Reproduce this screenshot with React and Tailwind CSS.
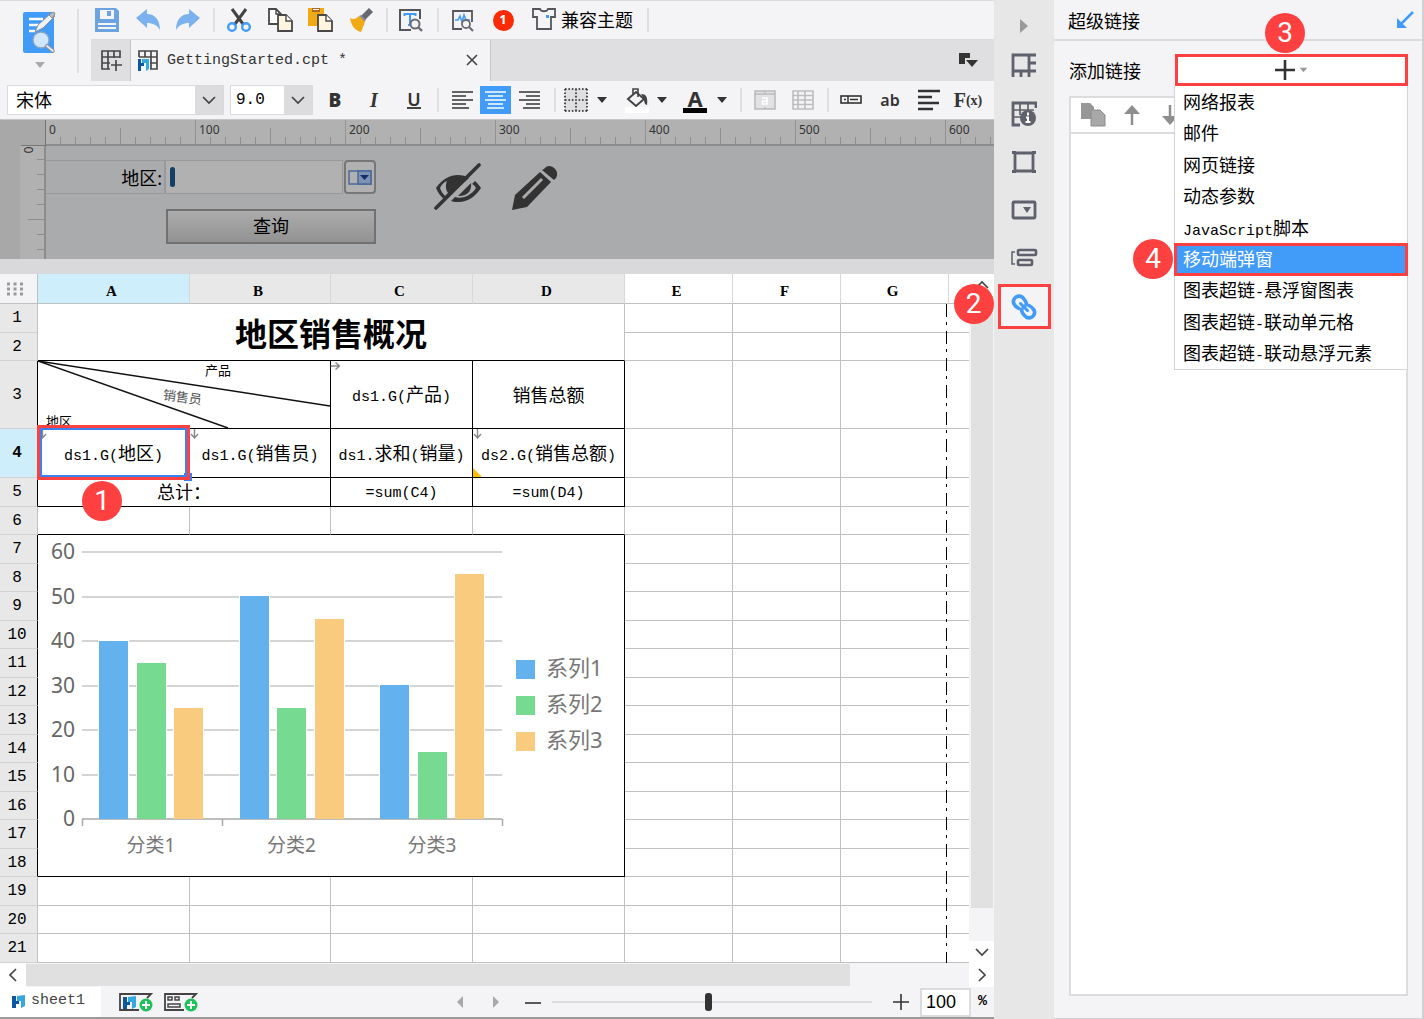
import React from "react";

const MIXED = /([\u3000-\u9fff\uff00-\uffef]+)/;

/* Latin runs are set in a monospace face, Chinese runs in a larger sans face. */
function Mixed({ children }) {
  return String(children)
    .split(MIXED)
    .filter(Boolean)
    .map((part, i) =>
      MIXED.test(part) ? (
        <span key={i} className="font-['Noto_Sans_CJK_SC',sans-serif] text-[18px]">{part}</span>
      ) : (
        <span key={i} className="font-['Liberation_Mono',monospace] text-[15px]">{part}</span>
      )
    );
}

function Svg({ w = 24, h = 24, className = "", children }) {
  return (
    <svg width={w} height={h} viewBox={`0 0 ${w} ${h}`} className={"shrink-0 " + className} fill="none" aria-hidden="true">
      {children}
    </svg>
  );
}

function Btn({ label, className = "", children, ...rest }) {
  return (
    <button type="button" aria-label={label} className={"flex shrink-0 items-center justify-center " + className} {...rest}>
      {children}
    </button>
  );
}

const Sep = ({ className = "" }) => <div className={"h-6 w-[2px] shrink-0 bg-[#dfdfe1] " + className} />;

const Caret = ({ className = "" }) => (
  <Svg w={12} h={8} className={className}>
    <path d="M1 1h10L6 7z" fill="currentColor" />
  </Svg>
);

const Badge = ({ n, className }) => (
  <span className={"absolute z-20 flex size-10 items-center justify-center rounded-full bg-[#fe4040] font-['Roboto',sans-serif] text-[28px] leading-none text-white " + className}>
    {n}
  </span>
);

const Chevron = ({ d }) => (
  <Svg w={16} h={16}>
    <path d={d} stroke="#444" strokeWidth="1.7" />
  </Svg>
);

/* ---------- icons ---------- */
const AppLogo = () => (
  <Svg w={36} h={46}>
    <rect x="1" y="3" width="31" height="41" rx="2" fill="#419bf9" />
    <path d="M7 10h14M7 16h10M7 22h6" stroke="#fff" strokeWidth="2.4" />
    <path d="M13 23l3-7L29 4l4 3-12 12z" fill="#eef2f7" stroke="#8d9299" strokeWidth="1" />
    <path d="M27 6l4-3 2 1-1 3-2 2z" fill="#b8bcc2" stroke="#8d9299" />
    <circle cx="19" cy="31" r="8" fill="#cfe6fd" stroke="#8aa4bf" strokeWidth="1.3" />
    <path d="M25 37l6 5" stroke="#8d9299" strokeWidth="3.6" strokeLinecap="round" />
    <path d="M25 37l6 5" stroke="#e7ebf0" strokeWidth="1.8" strokeLinecap="round" />
  </Svg>
);
const SaveIcon = () => (
  <Svg>
    <path d="M0 0h21l3 3v21H0z" fill="#6ba4e0" />
    <rect x="5" y="2" width="14" height="9" fill="#f4f4f6" />
    <rect x="12" y="3" width="4" height="5" fill="#6ba4e0" />
    <rect x="3" y="15" width="18" height="2" fill="#f4f4f6" />
    <rect x="3" y="19" width="18" height="2" fill="#f4f4f6" />
  </Svg>
);
const UndoIcon = ({ className }) => (
  <Svg className={className}>
    <path d="M0 10L11 1v5c8 0 13 6 13 16-3-5-7-7-13-7v5z" fill="#7ab1ef" />
  </Svg>
);
const CutIcon = () => (
  <Svg>
    <path d="M5 1l11 15M19 1L8 16" stroke="#444" strokeWidth="3" />
    <circle cx="5" cy="19" r="3.8" stroke="#419bf9" strokeWidth="2.4" />
    <circle cx="19" cy="19" r="3.8" stroke="#419bf9" strokeWidth="2.4" />
  </Svg>
);
const CopyIcon = () => (
  <Svg w={25}>
    <path d="M1 1h7l5 5v10H1z" fill="#fff" stroke="#484848" strokeWidth="1.8" />
    <path d="M8 1v5h5" stroke="#484848" strokeWidth="1.4" />
    <path d="M10 7h8l6 6v10H10z" fill="#fdf5df" stroke="#484848" strokeWidth="1.8" />
    <path d="M18 7v6h6" fill="#fff" stroke="#484848" strokeWidth="1.4" />
  </Svg>
);
const PasteIcon = () => (
  <Svg w={25}>
    <path d="M0 0h16v18H0z" fill="#f0ab14" />
    <path d="M4 0h8v4H4z" fill="#b5651d" />
    <path d="M5 1h6v1H5z" fill="#fff" />
    <path d="M10 7h8l6 6v10H10z" fill="#fdf5df" stroke="#484848" strokeWidth="1.8" />
    <path d="M18 7v6h6" fill="#fff" stroke="#484848" strokeWidth="1.4" />
  </Svg>
);
const BrushIcon = () => (
  <Svg>
    <path d="M20 1l3 3-7 7-3-3z" fill="#666872" stroke="#666872" strokeWidth="1.5" />
    <path d="M10 8l2-1 5 5-2 2z" fill="#8a8c94" />
    <path d="M10 8l6 6-4 10C7 23 2 18 1 10c3 2 6 1 9-2z" fill="#f0ab14" />
  </Svg>
);
const PreviewIcon = () => (
  <Svg>
    <path d="M21 11V2H1v20h11" stroke="#54565c" strokeWidth="2" />
    <path d="M5 6h12M11 6v11M5.500 5v3M16.500 5v3M9 17h4" stroke="#419bf9" strokeWidth="2" />
    <circle cx="16" cy="16" r="4.500" fill="#f4f4f6" stroke="#6b6d73" strokeWidth="2" />
    <path d="M19 19l4 4" stroke="#6b6d73" strokeWidth="2.4" />
  </Svg>
);
const MonitorIcon = () => (
  <Svg>
    <path d="M21 14V3H2v18h9" stroke="#54565c" strokeWidth="1.8" />
    <path d="M4 12h3l2-4 2 6 2-7 2 5h4" stroke="#419bf9" strokeWidth="1.6" />
    <circle cx="15" cy="16" r="4" fill="#f4f4f6" stroke="#6b6d73" strokeWidth="1.8" />
    <path d="M18 19l4 4" stroke="#6b6d73" strokeWidth="2.2" />
  </Svg>
);
const ShirtIcon = () => (
  <Svg>
    <path d="M1 2h7c1 3 7 3 8 0h7v8h-4v12H5V10H1z" stroke="#54565c" strokeWidth="1.8" />
    <rect x="14" y="8" width="3" height="3" fill="#419bf9" />
  </Svg>
);
const TableGrid = ({ plus }) => (
  <Svg w={22} h={22}>
    {plus ? (
      <g stroke="#484848" strokeWidth="1.7">
        <path d="M20 9V2H2v18h8M2 8h18M2 14h8M8 2v18M14 2v7" />
        <path d="M16 11v11M11 16h11" />
      </g>
    ) : (
      <g>
        <path d="M2 8V2h18v18h-7M2 8h18M8 2v6M14 2v18M13 14h7" stroke="#484848" strokeWidth="1.700" />
        <path d="M1 10h3v4h3v3H4v5H1z" fill="#0b57a4" />
        <path d="M5 10h7v10l-3 2v-8H5z" fill="#35a8e0" />
      </g>
    )}
  </Svg>
);
const ALIGN = {
  left: "M1 2h21M1 6h14M1 10h21M1 14h14M1 18h17",
  center: "M1 2h21M4 6h15M1 10h21M4 14h15M3 18h17",
  right: "M1 2h21M8 6h14M1 10h21M8 14h14M5 18h17",
};
const AlignIcon = ({ mode, color = "#333" }) => (
  <Svg w={23} h={20}>
    <path d={ALIGN[mode]} stroke={color} strokeWidth="1.7" />
  </Svg>
);
const BordersIcon = () => (
  <Svg>
    <rect x="1" y="1" width="22" height="22" fill="#dfdfe1" />
    <path d="M1 1h22M1 12h22M1 23h22M1 1v22M12 1v22M23 1v22" stroke="#222" strokeWidth="1.6" strokeDasharray="1.600 1.800" />
  </Svg>
);
const PaintIcon = () => (
  <Svg w={26} h={26}>
    <rect x="1" y="20" width="24" height="6" fill="#fff" />
    <path d="M4 12l8-7 8 7-8 7z" stroke="#444" strokeWidth="2" />
    <path d="M9 8V2h5v8" stroke="#444" strokeWidth="1.6" />
    <path d="M17 7c5 0 7 3 6 11-2 0-3-3-3-6z" fill="#444" />
  </Svg>
);
const MergeIcon = () => (
  <Svg w={22} h={20}>
    <rect x="1" y="1" width="20" height="18" fill="#e2e2e4" stroke="#bcbcbe" strokeWidth="1.6" />
    <path d="M1 4h20M11 1v3M11 17v2" stroke="#bcbcbe" strokeWidth="1.6" />
    <path d="M8 8h5v6H8.500v-3H13" stroke="#fff" strokeWidth="1.500" />
  </Svg>
);
const GridIcon = () => (
  <Svg w={22} h={20}>
    <path d="M1 1h20v18H1zM1 5.500h20M1 10h20M1 14.500h20M6 1v18M13 1v18" stroke="#bcbcbe" strokeWidth="1.6" />
  </Svg>
);
const FieldIcon = () => (
  <Svg w={22} h={10}>
    <rect x="1" y="1" width="20" height="7" stroke="#333" strokeWidth="1.6" />
    <path d="M8 1v7M10 4.500h8M4 4.500h2" stroke="#333" strokeWidth="1.500" />
  </Svg>
);
const LinesIcon = () => (
  <Svg w={22} h={22}>
    <path d="M0 2h22M0 8h14M0 14h21M0 20h15" stroke="#333" strokeWidth="2.6" />
  </Svg>
);
const EyeOffIcon = () => (
  <Svg w={48} h={48}>
    <path d="M2 25C8 16 16 12 24 12c4 0 8 1 11 3L11 37C7 34 4 30 2 25z" fill="#333" />
    <path d="M6 25c2-4 4-6 7-7-2 5-1 9 1 12l-3 3c-2-2-4-5-5-8z" fill="#aaabad" />
    <path d="M41 18c3 3 5 5 6 7-6 9-14 14-22 14-3 0-6 0-8-1l4-4c6 2 15 0 21-9-1-2-2-3-4-4z" fill="#333" />
    <path d="M37 20c1 7-3 13-12 13h-1z" fill="#333" />
    <path d="M2 45L45 2" stroke="#333" strokeWidth="3.6" strokeLinecap="round" />
  </Svg>
);
const PencilIcon = () => (
  <Svg w={48} h={48}>
    <path d="M33 6c5-8 17 1 12 9l-2 2L31 7z" fill="#333" />
    <path d="M29 9l11 10-24 25L1 47l3-15z" fill="#333" />
    <path d="M12 35l19-19" stroke="#aaabad" strokeWidth="3" />
  </Svg>
);
const FMark = () => (
  <g>
    <path d="M0 1h4v5h3v3H4v4H0z" fill="#0b57a4" />
    <path d="M5 1l8-1v11l-4 2V6H5z" fill="#35a8e0" />
  </g>
);
const AddSheet = ({ kind }) => (
  <Svg w={34} h={20}>
    <path d="M20 18H1V2h31l-4 4" stroke="#444" strokeWidth="1.8" />
    {kind === "report" ? (
      <g transform="translate(4 4)"><FMark /></g>
    ) : (
      <path d="M4 5h4v3H4zM11 5h4v3h-4zM4 12h12v3H4z" stroke="#444" strokeWidth="1.500" />
    )}
    <circle cx="27" cy="13" r="6.500" fill="#1fc15a" />
    <path d="M27 9v8M23 13h8" stroke="#fff" strokeWidth="2" />
  </Svg>
);

/* ---------- top area ---------- */
function TopBar() {
  return (
    <div className="flex h-[38px] items-center">
      <Btn label="保存" className="ml-[2px] w-7"><SaveIcon /></Btn>
      <Btn label="撤销" className="ml-[13px] w-7"><UndoIcon /></Btn>
      <Btn label="重做" className="ml-3 w-7"><UndoIcon className="-scale-x-100" /></Btn>
      <Sep className="ml-[11px]" />
      <Btn label="剪切" className="ml-[10px] w-7"><CutIcon /></Btn>
      <Btn label="复制" className="ml-[13px] w-7"><CopyIcon /></Btn>
      <Btn label="粘贴" className="ml-3 w-7"><PasteIcon /></Btn>
      <Btn label="格式刷" className="ml-[13px] w-7"><BrushIcon /></Btn>
      <Sep className="ml-[11px]" />
      <Btn label="预览" className="ml-[9px] w-7"><PreviewIcon /></Btn>
      <Sep className="ml-3" />
      <Btn label="性能监测" className="ml-[10px] w-7"><MonitorIcon /></Btn>
      <Btn label="通知" className="ml-3 w-7">
        <span className="flex size-[21px] items-center justify-center rounded-full bg-[#fb2c05] font-['Noto_Sans',sans-serif] text-[13px] font-bold text-white">1</span>
      </Btn>
      <button type="button" className="ml-[15px] flex shrink-0 items-center gap-[5px] pb-[2px] font-['Noto_Sans_CJK_SC',sans-serif] text-[18px] leading-6 text-black">
        <ShirtIcon />
        兼容主题
      </button>
      <Sep className="ml-[14px]" />
    </div>
  );
}

function TabBar() {
  return (
    <div className="flex h-[42px] border-t border-[#dcdcde] bg-[#dfdfe1]">
      <Btn label="新建" className="w-10 border-r border-[#c6c6c8] pb-[2px]"><TableGrid plus /></Btn>
      <div className="flex w-[360px] items-center border-r border-[#c6c6c8] bg-[#f4f4f6] pb-[2px] pl-[6px] pr-2">
        <TableGrid />
        <span className="ml-2 pt-[2px] text-[#333]"><Mixed>GettingStarted.cpt *</Mixed></span>
        <Btn label="关闭" className="ml-auto size-5">
          <Svg w={12} h={12}><path d="M1 1l10 10M11 1L1 11" stroke="#444" strokeWidth="1.6" /></Svg>
        </Btn>
      </div>
      <Btn label="标签列表" className="ml-auto mr-[14px] w-6 pb-[2px]">
        <Svg w={20} h={16}>
          <path d="M1 1h11v5H7v6H1z" fill="#333" />
          <path d="M8 8h12l-6 7z" fill="#333" />
        </Svg>
      </Btn>
    </div>
  );
}

function Dropdown({ label, value, className, textClass }) {
  return (
    <div className={"relative flex h-[30px] shrink-0 border border-[#dadadc] bg-white " + className}>
      <select aria-label={label} defaultValue={value} className={"h-full w-full appearance-none bg-transparent outline-none " + textClass}>
        <option>{value}</option>
      </select>
      <span className="pointer-events-none absolute inset-y-0 right-0 flex w-7 items-center justify-center bg-[#dcdcde]">
        <Chevron d="M2 5l6 6 6-6" />
      </span>
    </div>
  );
}

function FormatBar() {
  return (
    <div className="flex h-[39px] items-center border-b border-[#c4c5c7] px-[7px] text-[#333]">
      <Dropdown label="字体" value="宋体" className="w-[217px]" textClass="px-2 pb-[2px] font-['Noto_Sans_CJK_SC',sans-serif] text-[18px] text-black" />
      <Dropdown label="字号" value="9.0" className="ml-[6px] w-[83px]" textClass="px-[5px] text-[16px] text-black" />
      <Btn label="加粗" className="ml-[7px] w-[30px] font-['Noto_Sans',sans-serif] text-[19px] font-black">B</Btn>
      <Btn label="斜体" className="ml-[9px] w-[30px] font-['Liberation_Serif',serif] text-[20px] font-bold italic">I</Btn>
      <Btn label="下划线" className="ml-[10px] w-[30px]">
        <span className="border-b-2 border-[#444] font-['Noto_Sans',sans-serif] text-[18px] leading-4 font-semibold">U</span>
      </Btn>
      <Sep className="ml-2" />
      <Btn label="左对齐" className="ml-2 h-7 w-[30px]"><AlignIcon mode="left" /></Btn>
      <Btn label="居中" className="ml-[3px] h-7 w-[31px] bg-[#419bf9]"><AlignIcon mode="center" color="#fff" /></Btn>
      <Btn label="右对齐" className="ml-[3px] h-7 w-[30px]"><AlignIcon mode="right" /></Btn>
      <Sep className="ml-[10px]" />
      <Btn label="边框" className="ml-[6px] w-7"><BordersIcon /></Btn>
      <Btn label="边框选项" className="ml-[5px] w-[14px]"><Caret /></Btn>
      <Btn label="填充" className="ml-[14px] w-7"><PaintIcon /></Btn>
      <Btn label="填充选项" className="ml-1 w-[14px]"><Caret /></Btn>
      <Btn label="字体颜色" className="ml-3 w-7">
        <span className="border-b-[5px] border-black px-[4px] font-['Noto_Sans',sans-serif] text-[22px] leading-5 font-bold">A</span>
      </Btn>
      <Btn label="字体颜色选项" className="ml-[6px] w-[14px]"><Caret /></Btn>
      <Sep className="ml-[11px]" />
      <Btn label="合并单元格" className="ml-[9px] w-7"><MergeIcon /></Btn>
      <Btn label="取消合并" className="ml-[10px] w-7"><GridIcon /></Btn>
      <Sep className="ml-[10px]" />
      <Btn label="控件" className="ml-2 w-7"><FieldIcon /></Btn>
      <Btn label="文本" className="ml-[11px] w-7 font-['Noto_Sans',sans-serif] text-[16px] font-semibold">ab</Btn>
      <Btn label="富文本" className="ml-[11px] w-7"><LinesIcon /></Btn>
      <Btn label="公式" className="ml-[11px] w-7 font-['Liberation_Serif',serif] text-[20px] font-bold">
        F<span className="text-[14px]">(x)</span>
      </Btn>
    </div>
  );
}

/* ---------- parameter pane ---------- */
const TICKS = [0, 100, 200, 300, 400, 500, 600];

function ParameterPane() {
  return (
    <div className="grid h-[139px] grid-cols-[46px_1fr] grid-rows-[26px_1fr] overflow-hidden bg-[#aaabad] font-['Noto_Sans','Noto_Sans_CJK_SC',sans-serif]">
      <div className="flex justify-end border-r border-[#777] bg-[#a8a8a8]">
        <div className="mt-auto h-px w-6 bg-[#777]" />
      </div>
      <div className="flex overflow-hidden border-b-2 border-[#8c8c8c] bg-[#b1b1b1]">
        {TICKS.map((t) => (
          <div key={t} className="relative w-[150px] shrink-0 border-r border-[#939393]">
            <span className="block pl-[3px] text-[12px] leading-[19px] text-[#333]">{t}</span>
            <div className="absolute bottom-0 left-[14px] h-[7px] w-[136px] bg-[repeating-linear-gradient(to_right,#8e8e8e_0_1px,transparent_1px_15px)]" />
            <div className="absolute bottom-0 left-[74px] h-4 w-px bg-[#8e8e8e]" />
          </div>
        ))}
      </div>
      <div className="flex border-r-2 border-[#8c8c8c] bg-[#a8a8a8] pl-5">
        <div className="relative flex-1 bg-[#b1b1b1] text-[12px] text-[#333]">
          <span className="absolute left-[5px] top-[-5px] rotate-90 leading-[18px]">0</span>
          <div className="absolute right-0 top-[13px] h-[100px] w-[7px] bg-[repeating-linear-gradient(to_bottom,#8e8e8e_0_1px,transparent_1px_15px)]" />
          <div className="absolute right-0 top-[73px] h-px w-4 bg-[#8e8e8e]" />
        </div>
      </div>
      <div className="flex items-start pt-[14px]">
        <div className="w-[330px] text-[18px] text-black">
          <div className="flex h-[34px]">
            <label htmlFor="area" className="flex w-[120px] items-center justify-end border-y border-r-2 border-[#999] pr-[2px] pt-[2px]">地区:</label>
            <div className="flex w-[177px] items-center border-y border-r border-[#999] bg-[#b1b1b1] pl-1">
              <span className="h-5 w-[5px] shrink-0 rounded-sm bg-[#123f63]" />
              <input id="area" className="w-full min-w-0 bg-transparent outline-none" />
            </div>
            <Btn label="下拉框" className="ml-px w-8 rounded border-2 border-[#777] bg-[#b1b1b1]">
              <Svg w={24} h={15}>
                <rect x="1" y="1" width="22" height="13" fill="#b1b1b1" stroke="#4a6a9a" strokeWidth="1.500" />
                <rect x="10" y="1" width="13" height="13" fill="#7e93b3" stroke="#4a6a9a" strokeWidth="1.500" />
                <path d="M12 5h9l-4.500 5z" fill="#152c6b" />
              </Svg>
            </Btn>
          </div>
          <button type="button" className="ml-[120px] mt-[15px] flex h-[35px] w-[210px] items-center justify-center border-2 border-[#717171] bg-linear-to-b from-[#acacac] to-[#929292]">
            查询
          </button>
        </div>
        <Btn label="隐藏" className="ml-[58px] mt-[3px]"><EyeOffIcon /></Btn>
        <Btn label="编辑" className="ml-[29px] mt-[3px]"><PencilIcon /></Btn>
      </div>
    </div>
  );
}

/* ---------- chart ---------- */
const SERIES = [
  { name: "系列1", color: "#63b2ee", values: [40, 50, 30] },
  { name: "系列2", color: "#76da91", values: [35, 25, 15] },
  { name: "系列3", color: "#f8cb7f", values: [25, 45, 55] },
];
const CATEGORIES = ["分类1", "分类2", "分类3"];

function Chart() {
  const base = 284;
  const unit = 4.45;
  return (
    <svg width="586" height="341" viewBox="0 0 586 341" className="block font-['Noto_Sans','Noto_Sans_CJK_SC',sans-serif]" role="img" aria-label="柱形图">
      {[60, 50, 40, 30, 20, 10, 0].map((v) => {
        const y = Math.round(base - v * unit);
        return (
          <g key={v}>
            <line x1="44" x2="464" y1={y} y2={y} stroke={v ? "#c6c6c6" : "#a8a8a8"} strokeWidth="1.500" />
            <text x="37" y={y + 7} textAnchor="end" fontSize="21" fill="#666">{v}</text>
          </g>
        );
      })}
      <path d="M44.500 284v7M184.500 284v7M464.500 284v7" stroke="#a8a8a8" strokeWidth="1.500" />
      {CATEGORIES.map((c, ci) => (
        <g key={c}>
          {SERIES.map((s, si) => {
            const h = Math.round(s.values[ci] * unit);
            const x = Math.round(61 + ci * 140.5 + si * 37.5);
            return (
              <g key={s.name}>
                <rect x={x - 1} y={base - h - 1} width="31" height={h} fill="#fff" />
                <rect x={x} y={base - h} width="29" height={h} fill={s.color} />
              </g>
            );
          })}
          <text x={113 + ci * 140.5} y="317" textAnchor="middle" fontSize="19" fill="#777">{c}</text>
        </g>
      ))}
      {SERIES.map((s, i) => (
        <g key={s.name}>
          <rect x="478" y={125 + i * 36} width="19" height="19" fill={s.color} />
          <text x="508" y={141 + i * 36} fontSize="22" fill="#777">{s.name}</text>
        </g>
      ))}
    </svg>
  );
}

/* ---------- sheet ---------- */
const G = "border-r border-b border-[#c0c0c0] bg-white ";
const K = "border-r border-b border-black bg-white pt-[2px] text-center whitespace-nowrap leading-5 ";

const ArrowDown = ({ className = "" }) => (
  <Svg w={9} h={10} className={"absolute left-0 top-0 " + className}>
    <path d="M4.500 0v8M1 5l3.500 4L8 5" stroke="#888" strokeWidth="1.4" />
  </Svg>
);

function Blank({ n }) {
  return Array.from({ length: n }, (_, i) => <td key={i} className={G} />);
}

const Tail = () => (
  <>
    <td className={G} />
    <td className={G} />
    <td className="border-b border-[#c0c0c0] bg-white" />
    <td className="border-b border-[#c0c0c0] bg-white" />
  </>
);

function RowHead({ n, black, active }) {
  return (
    <th
      scope="row"
      className={
        "border-r border-b border-b-[#d2d2d4] pr-[3px] text-center text-[16px] leading-5 text-black " +
        (black ? "border-r-black " : "border-r-[#c0c0c0] ") +
        (active ? "bg-[#cdeefa] font-bold" : "bg-[#e8e8e8] font-normal")
      }
    >
      {n}
    </th>
  );
}

function Sheet() {
  return (
    <div className="relative min-w-0 flex-1">
      <table className="w-full table-fixed border-separate border-spacing-0">
        <colgroup>
          <col className="w-[38px]" />
          <col className="w-[152px]" />
          <col className="w-[141px]" />
          <col className="w-[142px]" />
          <col className="w-[152px]" />
          <col className="w-[108px]" />
          <col className="w-[108px]" />
          <col className="w-[107px]" />
          <col />
        </colgroup>
        <thead>
          <tr className="h-[30px] font-['Liberation_Serif',serif] text-[15px] leading-5 text-black">
            <th className="border-r border-b border-[#c0c0c0] bg-[#f4f4f6] p-0">
              <Svg w={18} h={14} className="ml-[6px]">
                <path d="M1 2h16M1 7h16M1 12h16" stroke="#999" strokeWidth="3" strokeDasharray="3 3.500" />
              </Svg>
            </th>
            {["A", "B", "C", "D", "E", "F", "G"].map((c, i) => (
              <th
                key={c}
                scope="col"
                className={
                  "border-b border-b-[#c0c0c0] pr-1 pt-1 font-bold " +
                  (i === 6 ? "" : "border-r border-r-[#d8d8d8] ") +
                  (i === 0 ? "bg-[#cdeefa]" : i < 4 ? "bg-[#e8e8e8]" : "bg-white")
                }
              >
                {c}
              </th>
            ))}
            <th className="border-b border-l border-b-[#c0c0c0] border-l-[#d8d8d8] bg-white" />
          </tr>
        </thead>
        <tbody className="text-black">
          <tr className="h-[29px]">
            <RowHead n={1} />
            <td colSpan={4} rowSpan={2} className="border-r border-b border-r-[#c0c0c0] border-b-black bg-white text-center font-['Noto_Sans_CJK_SC',sans-serif] text-[32px] leading-10 font-bold">
              地区销售概况
            </td>
            <Tail />
          </tr>
          <tr className="h-7">
            <RowHead n={2} />
            <Tail />
          </tr>
          <tr className="h-[68px]">
            <RowHead n={3} black />
            <td colSpan={2} className={K + "relative overflow-hidden font-['Noto_Sans_CJK_SC',sans-serif] text-[13px]"}>
              <svg className="absolute inset-0 size-full" viewBox="0 0 292 67" preserveAspectRatio="none" fill="none" aria-hidden="true">
                <path d="M0 0l292 45M0 0l190 67" stroke="#111" strokeWidth="1.500" />
              </svg>
              <span className="absolute left-[167px] top-0 leading-[18px]">产品</span>
              <span className="absolute left-[125px] top-[27px] rotate-8 leading-[18px] text-[#555]">销售员</span>
              <span className="absolute left-[8px] top-[51px] leading-[18px]">地区</span>
            </td>
            <td className={K + "relative"}>
              <ArrowDown className="-rotate-90" />
              <Mixed>ds1.G(产品)</Mixed>
            </td>
            <td className={K}><Mixed>销售总额</Mixed></td>
            <Tail />
          </tr>
          <tr className="h-[49px]">
            <RowHead n={4} black active />
            <td className={K + "relative"}>
              <ArrowDown />
              <Mixed>ds1.G(地区)</Mixed>
              <span className="pointer-events-none absolute -inset-x-px -top-1 -bottom-[3px] z-10 border-[3px] border-[#fe4040]">
                <span className="absolute inset-0 border-2 border-[#3b82f0]" />
                <span className="absolute -bottom-1 -right-[5px] size-2 bg-[#3b82f0]" />
                <span className="absolute -inset-[3px] border-[3px] border-[#fe4040]" />
              </span>
              <Badge n={1} className="left-11 top-[52px]" />
            </td>
            <td className={K + "relative"}>
              <ArrowDown />
              <Mixed>ds1.G(销售员)</Mixed>
            </td>
            <td className={K}><Mixed>ds1.求和(销量)</Mixed></td>
            <td className={K + "relative"}>
              <ArrowDown />
              <Mixed>ds2.G(销售总额)</Mixed>
              <Svg w={9} h={9} className="absolute bottom-0 left-0"><path d="M0 0l9 9H0z" fill="#fbc000" /></Svg>
            </td>
            <Tail />
          </tr>
          <tr className="h-[29px]">
            <RowHead n={5} black />
            <td colSpan={2} className={K}><Mixed>总计：</Mixed></td>
            <td className={K}><Mixed>=sum(C4)</Mixed></td>
            <td className={K}><Mixed>=sum(D4)</Mixed></td>
            <Tail />
          </tr>
          <tr className="h-7">
            <RowHead n={6} />
            {[0, 1, 2, 3].map((i) => (
              <td key={i} className="border-r border-b border-r-[#c0c0c0] border-b-black bg-white" />
            ))}
            <Tail />
          </tr>
          {Array.from({ length: 15 }, (_, i) => i + 7).map((n) => (
            <tr key={n} className={n % 2 ? "h-[29px]" : "h-7"}>
              <RowHead n={n} black={n < 19} />
              {n === 7 && (
                <td colSpan={4} rowSpan={12} className="border-r border-b border-black bg-white p-0">
                  <Chart />
                </td>
              )}
              {n > 18 && <Blank n={4} />}
              <Tail />
            </tr>
          ))}
        </tbody>
      </table>
      <div className="absolute bottom-0 left-[946px] top-[30px] w-px bg-[repeating-linear-gradient(to_bottom,#000_0_13px,transparent_13px_18px,#000_18px_21px,transparent_21px_27px)]" />
    </div>
  );
}

function SheetArea() {
  return (
    <>
      <div className="flex border-t-[15px] border-[#d9d9db] bg-[#f4f4f6]">
        <Sheet />
        <div className="flex w-[25px] flex-col items-center">
          <Btn label="向上滚动" className="h-[22px] w-full bg-white"><Chevron d="M2 11l6-6 6 6" /></Btn>
          <div className="mb-[33px] w-[22px] flex-1 bg-[#e1e1e2]" />
          <Btn label="向下滚动" className="h-[22px] w-full bg-white"><Chevron d="M2 5l6 6 6-6" /></Btn>
        </div>
      </div>
      <div className="flex h-6 items-center">
        <Btn label="向左滚动" className="h-full w-[26px] bg-white"><Chevron d="M11 2L5 8l6 6" /></Btn>
        <div className="h-[22px] flex-1 pr-[119px]"><div className="h-full bg-[#e0e0e0]" /></div>
        <Btn label="向右滚动" className="h-full w-[25px] bg-white"><Chevron d="M5 2l6 6-6 6" /></Btn>
      </div>
    </>
  );
}

function StatusBar() {
  return (
    <div className="flex h-8 items-center border-b-2 border-[#9a9a9a] text-[#444]">
      <button type="button" className="flex h-full w-[101px] items-center gap-[5px] bg-white pb-px pl-3">
        <Svg w={14} h={14}><FMark /></Svg>
        <Mixed>sheet1</Mixed>
      </button>
      <Btn label="新增报表" className="ml-[18px]"><AddSheet kind="report" /></Btn>
      <Btn label="新增聚合块" className="ml-[11px]"><AddSheet kind="form" /></Btn>
      <Btn label="上一页" className="ml-auto w-[14px]">
        <Svg w={8} h={12}><path d="M7 0v12L1 6z" fill="#a8a8aa" /></Svg>
      </Btn>
      <Btn label="下一页" className="ml-[22px] w-[14px]">
        <Svg w={8} h={12}><path d="M1 0v12l6-6z" fill="#a8a8aa" /></Svg>
      </Btn>
      <Btn label="缩小" className="ml-[22px] w-4"><Svg w={16} h={16}><path d="M0 9h16" stroke="#333" strokeWidth="1.6" /></Svg></Btn>
      <input
        type="range"
        aria-label="缩放"
        defaultValue="49"
        className="ml-[11px] h-5 w-[320px] appearance-none bg-transparent [&::-webkit-slider-runnable-track]:h-[2px] [&::-webkit-slider-runnable-track]:bg-[#dcdcde] [&::-webkit-slider-thumb]:-mt-2 [&::-webkit-slider-thumb]:h-[18px] [&::-webkit-slider-thumb]:w-[7px] [&::-webkit-slider-thumb]:appearance-none [&::-webkit-slider-thumb]:rounded-[3px] [&::-webkit-slider-thumb]:bg-[#333]"
      />
      <Btn label="放大" className="ml-[21px] w-4"><Svg w={16} h={16}><path d="M0 8h16M8 0v16" stroke="#333" strokeWidth="1.6" /></Svg></Btn>
      <input aria-label="缩放比例" defaultValue="100" className="ml-[11px] h-[29px] w-[51px] shrink-0 border-2 border-[#dcdcde] bg-white pl-1 font-['Liberation_Sans',sans-serif] text-[18px] text-black outline-none" />
      <span className="w-[23px] shrink-0 text-center text-[15px] font-bold text-black">%</span>
    </div>
  );
}

/* ---------- side rail ---------- */
const RAIL = [
  ["单元格元素", <Svg key="a" w={26} h={26}><path d="M25 2H2v22M2 18h23M18 2v22M25 10h-7M10 18v6" stroke="#5f616c" strokeWidth="2.800" /></Svg>],
  ["单元格属性", (
    <Svg key="b" w={26} h={26}>
      <path d="M25 7V2H2v22h7" stroke="#5f616c" strokeWidth="2.800" />
      <path d="M2 9h21M2 16h8M9 2v12M17 2v7" stroke="#5f616c" strokeWidth="1.700" />
      <circle cx="17" cy="17" r="8" fill="#5f616c" />
      <path d="M17 11.500v3M15 16.500h2v5M14.500 21h5" stroke="#fff" strokeWidth="2" />
    </Svg>
  )],
  ["悬浮元素", (
    <Svg key="c" w={26} h={26}>
      <path d="M4 4h18v18H4z" stroke="#5f616c" strokeWidth="2.800" />
      <path d="M1 2h4v3H1zM21 2h4v3h-4zM1 21h4v3H1zM21 21h4v3h-4z" fill="#5f616c" />
    </Svg>
  )],
  ["控件设置", (
    <Svg key="d" w={26} h={26}>
      <rect x="2" y="5" width="22" height="16" rx="1" stroke="#5f616c" strokeWidth="2.800" />
      <path d="M12 10h8l-4 6z" fill="#5f616c" />
    </Svg>
  )],
  ["条件属性", (
    <Svg key="e" w={28} h={26}>
      <path d="M5 7H2v12h3" stroke="#5f616c" strokeWidth="1.500" />
      <rect x="8" y="5" width="18" height="5" rx="1" stroke="#5f616c" strokeWidth="2.600" />
      <rect x="8" y="15" width="14" height="5" rx="1" stroke="#5f616c" strokeWidth="2.600" />
    </Svg>
  )],
];

function Rail() {
  return (
    <nav aria-label="属性面板" className="flex w-[60px] shrink-0 flex-col items-center bg-[#e7e7e8] pt-[10px]">
      <Btn label="收起" className="h-8 w-full">
        <Svg w={8} h={14}><path d="M0 0v14l8-7z" fill="#999" /></Svg>
      </Btn>
      {RAIL.map(([label, icon]) => (
        <Btn key={label} label={label} className="h-12 w-full">{icon}</Btn>
      ))}
      <Btn label="超级链接" className="relative mt-[2px] h-[45px] w-[53px] border-[3px] border-[#fe4040] bg-[#f4f4f6]">
        <Svg w={26} h={26}>
          <g stroke="#419bf9" strokeWidth="3.600" strokeLinecap="round">
            <path d="M8 14.500C3 12 1 8 3.500 4.500S10.500 1.500 13 5s2.500 4 2 6" />
            <path d="M18 11.500C23 14 25 18 22.500 21.500S15.500 24.500 13 21s-2.500-4-2-6" />
            <path d="M9.500 9.500l7 7" strokeWidth="3" />
          </g>
        </Svg>
        <Badge n={2} className="-left-[47px] -top-[3px]" />
      </Btn>
    </nav>
  );
}

/* ---------- hyperlink panel ---------- */
const MENU = ["网络报表", "邮件", "网页链接", "动态参数", "JavaScript脚本", "移动端弹窗", "图表超链-悬浮窗图表", "图表超链-联动单元格", "图表超链-联动悬浮元素"];

function LinkPanel() {
  return (
    <aside className="flex w-[370px] shrink-0 flex-col border-r-2 border-b border-[#d0d0d2] bg-[#f4f4f6] font-['Noto_Sans_CJK_SC',sans-serif] text-[18px] leading-6 text-black">
      <header className="flex h-[41px] items-center justify-between border-b-2 border-[#dcdcde] pl-[14px] pr-2">
        <h2>超级链接</h2>
        <Btn label="弹出面板">
          <Svg w={18} h={18}>
            <path d="M17 1L5 13" stroke="#419bf9" strokeWidth="2.500" />
            <path d="M1 7l10 10H1z" fill="#419bf9" />
          </Svg>
        </Btn>
      </header>
      <div className="flex flex-1 flex-col pb-[22px] pl-[15px] pr-[14px] pt-[13px]">
        <div className="flex h-8 items-center justify-between">
          <span>添加链接</span>
          <div className="relative">
            <Btn label="添加链接" aria-haspopup="menu" className="h-8 w-[233px] gap-1 border-[3px] border-[#fe4040] bg-white">
              <Svg w={20} h={20}><path d="M10 0v20M0 10h20" stroke="#333" strokeWidth="2.600" /></Svg>
              <Caret className="w-[9px] text-[#999]" />
            </Btn>
            <Badge n={3} className="-top-[41px] left-[90px]" />
            <ul role="menu" className="absolute -left-px top-8 z-10 w-[234px] border border-t-0 border-[#d4d4d6] bg-white">
              {MENU.map((m) => (
                <li key={m} role="none" className="relative odd:h-8 even:h-[31px]">
                  {m === "移动端弹窗" ? (
                    <>
                      <button role="menuitem" type="button" className="-my-px -ml-px flex h-[33px] w-[234px] items-center border-[3px] border-[#fe4040] bg-[#419bf9] pb-[3px] pl-[6px] text-white">
                        <span><Mixed>{m}</Mixed></span>
                      </button>
                      <Badge n={4} className="-left-[42px] -top-1" />
                    </>
                  ) : (
                    <button
                      role="menuitem"
                      type="button"
                      className={"flex h-full w-full items-center whitespace-pre pl-2 " + (/[a-z-]/i.test(m) ? "pt-[3px]" : "pb-[3px]")}
                    >
                      <span><Mixed>{m}</Mixed></span>
                    </button>
                  )}
                </li>
              ))}
            </ul>
          </div>
        </div>
        <div className="mt-[10px] flex-1 border-2 border-[#dcdcde] bg-white">
          <div className="flex h-9 items-center border-b-2 border-[#dcdcde] pl-[10px]">
            <Btn label="复制">
              <Svg w={25} h={24}>
                <path d="M0 0h9l4 4v12H0z" fill="#979797" />
                <path d="M10 7h9l5 5v11H10z" fill="#a8a8a8" stroke="#8c8c8c" />
              </Svg>
            </Btn>
            <Btn label="上移" className="ml-[18px]"><Svg w={16} h={20}><path d="M8 20V4" stroke="#8e8e8e" strokeWidth="2.500" /><path d="M0 9l8-9 8 9z" fill="#8e8e8e" /></Svg></Btn>
            <Btn label="下移" className="ml-[22px]"><Svg w={16} h={20}><path d="M8 0v16" stroke="#8e8e8e" strokeWidth="2.500" /><path d="M0 11l8 9 8-9z" fill="#8e8e8e" /></Svg></Btn>
          </div>
        </div>
      </div>
    </aside>
  );
}

export default function App() {
  return (
    <div className="flex min-h-screen bg-[#f4f4f6] font-['Liberation_Mono','Noto_Sans_CJK_SC',monospace]">
      <main className="flex min-w-0 flex-1 flex-col">
        <div className="flex border-t border-[#dcdcde]">
          <div className="flex w-[91px] shrink-0">
            <Btn label="模板" className="ml-[22px] flex-col gap-[6px] text-[#aaa]">
              <AppLogo />
              <Caret className="mb-1" />
            </Btn>
            <div className="ml-[19px] mt-2 h-16 w-[2px] bg-[#dfdfe1]" />
          </div>
          <div className="min-w-0 flex-1">
            <TopBar />
            <TabBar />
          </div>
        </div>
        <FormatBar />
        <ParameterPane />
        <SheetArea />
        <StatusBar />
      </main>
      <Rail />
      <LinkPanel />
    </div>
  );
}
